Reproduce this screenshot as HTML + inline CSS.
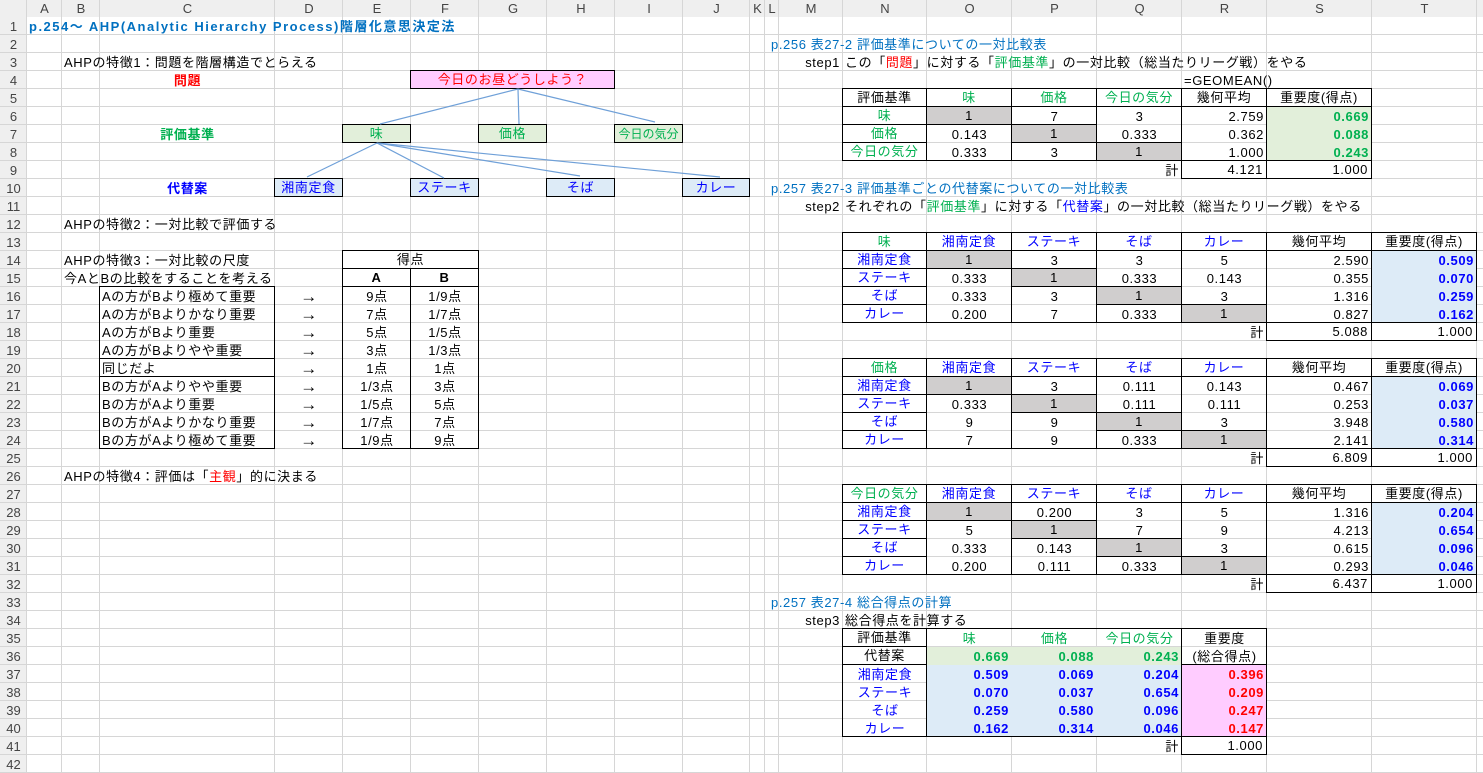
<!DOCTYPE html>
<html><head><meta charset="utf-8">
<style>
*{box-sizing:border-box;margin:0;padding:0}
body{width:1483px;height:763px;overflow:hidden;background:#fff;font-family:"Liberation Sans","Noto Sans CJK JP",sans-serif;font-size:13px;color:#000;position:relative}
#g{position:absolute;left:0;top:0;display:grid;width:1483px;
grid-template-columns:27px 35px 38px 175px 68px 68px 68px 68px 68px 68px 67px 15px 14px 64px 84px 85px 85px 85px 85px 105px 105px 6px;
grid-template-rows:17px repeat(42,18px);
background:
linear-gradient(#d6d6d6,#d6d6d6) 26px 0/1px 100% no-repeat,
linear-gradient(#d6d6d6,#d6d6d6) 61px 0/1px 100% no-repeat,
linear-gradient(#d6d6d6,#d6d6d6) 99px 0/1px 100% no-repeat,
linear-gradient(#d6d6d6,#d6d6d6) 274px 0/1px 100% no-repeat,
linear-gradient(#d6d6d6,#d6d6d6) 342px 0/1px 100% no-repeat,
linear-gradient(#d6d6d6,#d6d6d6) 410px 0/1px 100% no-repeat,
linear-gradient(#d6d6d6,#d6d6d6) 478px 0/1px 100% no-repeat,
linear-gradient(#d6d6d6,#d6d6d6) 546px 0/1px 100% no-repeat,
linear-gradient(#d6d6d6,#d6d6d6) 614px 0/1px 100% no-repeat,
linear-gradient(#d6d6d6,#d6d6d6) 682px 0/1px 100% no-repeat,
linear-gradient(#d6d6d6,#d6d6d6) 749px 0/1px 100% no-repeat,
linear-gradient(#d6d6d6,#d6d6d6) 764px 0/1px 100% no-repeat,
linear-gradient(#d6d6d6,#d6d6d6) 778px 0/1px 100% no-repeat,
linear-gradient(#d6d6d6,#d6d6d6) 842px 0/1px 100% no-repeat,
linear-gradient(#d6d6d6,#d6d6d6) 926px 0/1px 100% no-repeat,
linear-gradient(#d6d6d6,#d6d6d6) 1011px 0/1px 100% no-repeat,
linear-gradient(#d6d6d6,#d6d6d6) 1096px 0/1px 100% no-repeat,
linear-gradient(#d6d6d6,#d6d6d6) 1181px 0/1px 100% no-repeat,
linear-gradient(#d6d6d6,#d6d6d6) 1266px 0/1px 100% no-repeat,
linear-gradient(#d6d6d6,#d6d6d6) 1371px 0/1px 100% no-repeat,
linear-gradient(#d6d6d6,#d6d6d6) 1476px 0/1px 100% no-repeat,
repeating-linear-gradient(to bottom,transparent 0 17px,#d6d6d6 17px 18px) 0 17px/100% 100% no-repeat,
linear-gradient(#efefef,#efefef) 0 0/100% 17px no-repeat,
linear-gradient(#efefef,#efefef) 0 0/27px 100% no-repeat;
}
#g>i{font-style:normal;display:flex;align-items:center;justify-content:center;white-space:nowrap;line-height:1;letter-spacing:0.6px}
#g>i.l{justify-content:flex-start;padding-left:2px}
#g>i.r{justify-content:flex-end;padding-right:3px}
#g>i.h{color:#444;font-size:13px;letter-spacing:0}
#g>i.ar{font-size:17px}
.b{border:1px solid #000;margin:-1px 0 0 -1px}
.x{z-index:2}
.gy{background:#d0cece}
.gn{background:#e2efda}
.bb{background:#ddebf7}
.pk{background:#ffccff}
.G{color:#00b050}.B{color:#0000ff}.R{color:#ff0000}.T{color:#0070c0}
.w{font-weight:bold}
svg{position:absolute;left:0;top:0;z-index:5}
</style></head><body>
<div id="g">
<i class="h" style="grid-area:1/2">A</i><i class="h" style="grid-area:1/3">B</i><i class="h" style="grid-area:1/4">C</i><i class="h" style="grid-area:1/5">D</i><i class="h" style="grid-area:1/6">E</i><i class="h" style="grid-area:1/7">F</i><i class="h" style="grid-area:1/8">G</i><i class="h" style="grid-area:1/9">H</i><i class="h" style="grid-area:1/10">I</i><i class="h" style="grid-area:1/11">J</i><i class="h" style="grid-area:1/12">K</i><i class="h" style="grid-area:1/13">L</i><i class="h" style="grid-area:1/14">M</i><i class="h" style="grid-area:1/15">N</i><i class="h" style="grid-area:1/16">O</i><i class="h" style="grid-area:1/17">P</i><i class="h" style="grid-area:1/18">Q</i><i class="h" style="grid-area:1/19">R</i><i class="h" style="grid-area:1/20">S</i><i class="h" style="grid-area:1/21">T</i>
<i class="h" style="grid-area:2/1">1</i><i class="h" style="grid-area:3/1">2</i><i class="h" style="grid-area:4/1">3</i><i class="h" style="grid-area:5/1">4</i><i class="h" style="grid-area:6/1">5</i><i class="h" style="grid-area:7/1">6</i><i class="h" style="grid-area:8/1">7</i><i class="h" style="grid-area:9/1">8</i><i class="h" style="grid-area:10/1">9</i><i class="h" style="grid-area:11/1">10</i><i class="h" style="grid-area:12/1">11</i><i class="h" style="grid-area:13/1">12</i><i class="h" style="grid-area:14/1">13</i><i class="h" style="grid-area:15/1">14</i><i class="h" style="grid-area:16/1">15</i><i class="h" style="grid-area:17/1">16</i><i class="h" style="grid-area:18/1">17</i><i class="h" style="grid-area:19/1">18</i><i class="h" style="grid-area:20/1">19</i><i class="h" style="grid-area:21/1">20</i><i class="h" style="grid-area:22/1">21</i><i class="h" style="grid-area:23/1">22</i><i class="h" style="grid-area:24/1">23</i><i class="h" style="grid-area:25/1">24</i><i class="h" style="grid-area:26/1">25</i><i class="h" style="grid-area:27/1">26</i><i class="h" style="grid-area:28/1">27</i><i class="h" style="grid-area:29/1">28</i><i class="h" style="grid-area:30/1">29</i><i class="h" style="grid-area:31/1">30</i><i class="h" style="grid-area:32/1">31</i><i class="h" style="grid-area:33/1">32</i><i class="h" style="grid-area:34/1">33</i><i class="h" style="grid-area:35/1">34</i><i class="h" style="grid-area:36/1">35</i><i class="h" style="grid-area:37/1">36</i><i class="h" style="grid-area:38/1">37</i><i class="h" style="grid-area:39/1">38</i><i class="h" style="grid-area:40/1">39</i><i class="h" style="grid-area:41/1">40</i><i class="h" style="grid-area:42/1">41</i><i class="h" style="grid-area:43/1">42</i>

<i class="l T w" style="grid-area:2/2/3/12;letter-spacing:1.5px">p.254～ AHP(Analytic Hierarchy Process)階層化意思決定法</i>
<i class="l" style="grid-area:4/3/5/8">AHPの特徴1：問題を階層構造でとらえる</i>
<i class="R w" style="grid-area:5/4">問題</i>
<i class="b pk R" style="grid-area:5/7/6/10">今日のお昼どうしよう？</i>
<i class="G w" style="grid-area:8/4">評価基準</i>
<i class="b gn G" style="grid-area:8/6">味</i>
<i class="b gn G" style="grid-area:8/8">価格</i>
<i class="b gn G" style="grid-area:8/10;font-size:12px;letter-spacing:0">今日の気分</i>
<i class="B w" style="grid-area:11/4">代替案</i>
<i class="b bb B" style="grid-area:11/5">湘南定食</i>
<i class="b bb B" style="grid-area:11/7">ステーキ</i>
<i class="b bb B" style="grid-area:11/9">そば</i>
<i class="b bb B" style="grid-area:11/11">カレー</i>
<i class="l" style="grid-area:13/3/14/8">AHPの特徴2：一対比較で評価する</i>
<i class="l" style="grid-area:15/3/16/6">AHPの特徴3：一対比較の尺度</i>
<i class="l" style="grid-area:16/3/17/6">今AとBの比較をすることを考える</i>
<i class="b" style="grid-area:15/6/16/8">得点</i>
<i class="b w" style="grid-area:16/6">A</i>
<i class="b w" style="grid-area:16/7">B</i>
<i class="l" style="grid-area:17/4">Aの方がBより極めて重要</i><i class="ar" style="grid-area:17/5">→</i><i style="grid-area:17/6">9点</i><i style="grid-area:17/7">1/9点</i>
<i class="l" style="grid-area:18/4">Aの方がBよりかなり重要</i><i class="ar" style="grid-area:18/5">→</i><i style="grid-area:18/6">7点</i><i style="grid-area:18/7">1/7点</i>
<i class="l" style="grid-area:19/4">Aの方がBより重要</i><i class="ar" style="grid-area:19/5">→</i><i style="grid-area:19/6">5点</i><i style="grid-area:19/7">1/5点</i>
<i class="l" style="grid-area:20/4">Aの方がBよりやや重要</i><i class="ar" style="grid-area:20/5">→</i><i style="grid-area:20/6">3点</i><i style="grid-area:20/7">1/3点</i>
<i class="l" style="grid-area:21/4">同じだよ</i><i class="ar" style="grid-area:21/5">→</i><i style="grid-area:21/6">1点</i><i style="grid-area:21/7">1点</i>
<i class="l" style="grid-area:22/4">Bの方がAよりやや重要</i><i class="ar" style="grid-area:22/5">→</i><i style="grid-area:22/6">1/3点</i><i style="grid-area:22/7">3点</i>
<i class="l" style="grid-area:23/4">Bの方がAより重要</i><i class="ar" style="grid-area:23/5">→</i><i style="grid-area:23/6">1/5点</i><i style="grid-area:23/7">5点</i>
<i class="l" style="grid-area:24/4">Bの方がAよりかなり重要</i><i class="ar" style="grid-area:24/5">→</i><i style="grid-area:24/6">1/7点</i><i style="grid-area:24/7">7点</i>
<i class="l" style="grid-area:25/4">Bの方がAより極めて重要</i><i class="ar" style="grid-area:25/5">→</i><i style="grid-area:25/6">1/9点</i><i style="grid-area:25/7">9点</i>
<i class="b x" style="grid-area:17/4/21/5"></i><i class="b x" style="grid-area:21/4/22/5"></i><i class="b x" style="grid-area:22/4/26/5"></i>
<i class="b x" style="grid-area:17/6/26/7"></i><i class="b x" style="grid-area:17/7/26/8"></i>
<i class="l" style="grid-area:27/3/28/8">AHPの特徴4：評価は「<span class="R">主観</span>」的に決まる</i>

<i class="l T" style="grid-area:3/13/4/19;padding-left:6px">p.256 表27-2 評価基準についての一対比較表</i>
<i class="r" style="grid-area:4/14">step1</i>
<i class="l" style="grid-area:4/15/5/21">この「<span class="R">問題</span>」に対する「<span class="G">評価基準</span>」の一対比較（総当たりリーグ戦）をやる</i>
<i class="l" style="grid-area:5/19/6/21">=GEOMEAN()</i>
<i class="b" style="grid-area:6/15">評価基準</i><i class="b G" style="grid-area:6/16">味</i><i class="b G" style="grid-area:6/17">価格</i><i class="b G" style="grid-area:6/18">今日の気分</i><i class="b" style="grid-area:6/19">幾何平均</i><i class="b" style="grid-area:6/20">重要度(得点)</i>
<i class="b G" style="grid-area:7/15">味</i><i class="b G" style="grid-area:8/15">価格</i><i class="b G" style="grid-area:9/15">今日の気分</i>
<i class="b gy" style="grid-area:7/16">1</i><i style="grid-area:7/17">7</i><i style="grid-area:7/18">3</i><i class="r" style="grid-area:7/19">2.759</i><i class="r gn G w" style="grid-area:7/20">0.669</i>
<i style="grid-area:8/16">0.143</i><i class="b gy" style="grid-area:8/17">1</i><i style="grid-area:8/18">0.333</i><i class="r" style="grid-area:8/19">0.362</i><i class="r gn G w" style="grid-area:8/20">0.088</i>
<i style="grid-area:9/16">0.333</i><i style="grid-area:9/17">3</i><i class="b gy" style="grid-area:9/18">1</i><i class="r" style="grid-area:9/19">1.000</i><i class="r gn G w" style="grid-area:9/20">0.243</i>
<i class="b x" style="grid-area:7/16/10/17"></i><i class="b x" style="grid-area:7/17/10/18"></i><i class="b x" style="grid-area:7/18/10/19"></i><i class="b x" style="grid-area:7/19/10/20"></i><i class="b x" style="grid-area:7/20/10/21"></i>
<i class="r" style="grid-area:10/18">計</i><i class="b r" style="grid-area:10/19">4.121</i><i class="b r" style="grid-area:10/20">1.000</i>

<i class="l T" style="grid-area:11/13/12/19;padding-left:6px">p.257 表27-3 評価基準ごとの代替案についての一対比較表</i>
<i class="r" style="grid-area:12/14">step2</i>
<i class="l" style="grid-area:12/15/13/21">それぞれの「<span class="G">評価基準</span>」に対する「<span class="B">代替案</span>」の一対比較（総当たりリーグ戦）をやる</i>

<i class="b G" style="grid-area:14/15">味</i><i class="b B" style="grid-area:14/16">湘南定食</i><i class="b B" style="grid-area:14/17">ステーキ</i><i class="b B" style="grid-area:14/18">そば</i><i class="b B" style="grid-area:14/19">カレー</i><i class="b" style="grid-area:14/20">幾何平均</i><i class="b" style="grid-area:14/21">重要度(得点)</i>
<i class="b B" style="grid-area:15/15">湘南定食</i><i class="b B" style="grid-area:16/15">ステーキ</i><i class="b B" style="grid-area:17/15">そば</i><i class="b B" style="grid-area:18/15">カレー</i>
<i class="b gy" style="grid-area:15/16">1</i><i style="grid-area:15/17">3</i><i style="grid-area:15/18">3</i><i style="grid-area:15/19">5</i><i class="r" style="grid-area:15/20">2.590</i><i class="r bb B w" style="grid-area:15/21">0.509</i>
<i style="grid-area:16/16">0.333</i><i class="b gy" style="grid-area:16/17">1</i><i style="grid-area:16/18">0.333</i><i style="grid-area:16/19">0.143</i><i class="r" style="grid-area:16/20">0.355</i><i class="r bb B w" style="grid-area:16/21">0.070</i>
<i style="grid-area:17/16">0.333</i><i style="grid-area:17/17">3</i><i class="b gy" style="grid-area:17/18">1</i><i style="grid-area:17/19">3</i><i class="r" style="grid-area:17/20">1.316</i><i class="r bb B w" style="grid-area:17/21">0.259</i>
<i style="grid-area:18/16">0.200</i><i style="grid-area:18/17">7</i><i style="grid-area:18/18">0.333</i><i class="b gy" style="grid-area:18/19">1</i><i class="r" style="grid-area:18/20">0.827</i><i class="r bb B w" style="grid-area:18/21">0.162</i>
<i class="b x" style="grid-area:15/16/19/17"></i><i class="b x" style="grid-area:15/17/19/18"></i><i class="b x" style="grid-area:15/18/19/19"></i><i class="b x" style="grid-area:15/19/19/20"></i><i class="b x" style="grid-area:15/20/19/21"></i><i class="b x" style="grid-area:15/21/19/22"></i>
<i class="r" style="grid-area:19/19">計</i><i class="b r" style="grid-area:19/20">5.088</i><i class="b r" style="grid-area:19/21">1.000</i>

<i class="b G" style="grid-area:21/15">価格</i><i class="b B" style="grid-area:21/16">湘南定食</i><i class="b B" style="grid-area:21/17">ステーキ</i><i class="b B" style="grid-area:21/18">そば</i><i class="b B" style="grid-area:21/19">カレー</i><i class="b" style="grid-area:21/20">幾何平均</i><i class="b" style="grid-area:21/21">重要度(得点)</i>
<i class="b B" style="grid-area:22/15">湘南定食</i><i class="b B" style="grid-area:23/15">ステーキ</i><i class="b B" style="grid-area:24/15">そば</i><i class="b B" style="grid-area:25/15">カレー</i>
<i class="b gy" style="grid-area:22/16">1</i><i style="grid-area:22/17">3</i><i style="grid-area:22/18">0.111</i><i style="grid-area:22/19">0.143</i><i class="r" style="grid-area:22/20">0.467</i><i class="r bb B w" style="grid-area:22/21">0.069</i>
<i style="grid-area:23/16">0.333</i><i class="b gy" style="grid-area:23/17">1</i><i style="grid-area:23/18">0.111</i><i style="grid-area:23/19">0.111</i><i class="r" style="grid-area:23/20">0.253</i><i class="r bb B w" style="grid-area:23/21">0.037</i>
<i style="grid-area:24/16">9</i><i style="grid-area:24/17">9</i><i class="b gy" style="grid-area:24/18">1</i><i style="grid-area:24/19">3</i><i class="r" style="grid-area:24/20">3.948</i><i class="r bb B w" style="grid-area:24/21">0.580</i>
<i style="grid-area:25/16">7</i><i style="grid-area:25/17">9</i><i style="grid-area:25/18">0.333</i><i class="b gy" style="grid-area:25/19">1</i><i class="r" style="grid-area:25/20">2.141</i><i class="r bb B w" style="grid-area:25/21">0.314</i>
<i class="b x" style="grid-area:22/16/26/17"></i><i class="b x" style="grid-area:22/17/26/18"></i><i class="b x" style="grid-area:22/18/26/19"></i><i class="b x" style="grid-area:22/19/26/20"></i><i class="b x" style="grid-area:22/20/26/21"></i><i class="b x" style="grid-area:22/21/26/22"></i>
<i class="r" style="grid-area:26/19">計</i><i class="b r" style="grid-area:26/20">6.809</i><i class="b r" style="grid-area:26/21">1.000</i>

<i class="b G" style="grid-area:28/15">今日の気分</i><i class="b B" style="grid-area:28/16">湘南定食</i><i class="b B" style="grid-area:28/17">ステーキ</i><i class="b B" style="grid-area:28/18">そば</i><i class="b B" style="grid-area:28/19">カレー</i><i class="b" style="grid-area:28/20">幾何平均</i><i class="b" style="grid-area:28/21">重要度(得点)</i>
<i class="b B" style="grid-area:29/15">湘南定食</i><i class="b B" style="grid-area:30/15">ステーキ</i><i class="b B" style="grid-area:31/15">そば</i><i class="b B" style="grid-area:32/15">カレー</i>
<i class="b gy" style="grid-area:29/16">1</i><i style="grid-area:29/17">0.200</i><i style="grid-area:29/18">3</i><i style="grid-area:29/19">5</i><i class="r" style="grid-area:29/20">1.316</i><i class="r bb B w" style="grid-area:29/21">0.204</i>
<i style="grid-area:30/16">5</i><i class="b gy" style="grid-area:30/17">1</i><i style="grid-area:30/18">7</i><i style="grid-area:30/19">9</i><i class="r" style="grid-area:30/20">4.213</i><i class="r bb B w" style="grid-area:30/21">0.654</i>
<i style="grid-area:31/16">0.333</i><i style="grid-area:31/17">0.143</i><i class="b gy" style="grid-area:31/18">1</i><i style="grid-area:31/19">3</i><i class="r" style="grid-area:31/20">0.615</i><i class="r bb B w" style="grid-area:31/21">0.096</i>
<i style="grid-area:32/16">0.200</i><i style="grid-area:32/17">0.111</i><i style="grid-area:32/18">0.333</i><i class="b gy" style="grid-area:32/19">1</i><i class="r" style="grid-area:32/20">0.293</i><i class="r bb B w" style="grid-area:32/21">0.046</i>
<i class="b x" style="grid-area:29/16/33/17"></i><i class="b x" style="grid-area:29/17/33/18"></i><i class="b x" style="grid-area:29/18/33/19"></i><i class="b x" style="grid-area:29/19/33/20"></i><i class="b x" style="grid-area:29/20/33/21"></i><i class="b x" style="grid-area:29/21/33/22"></i>
<i class="r" style="grid-area:33/19">計</i><i class="b r" style="grid-area:33/20">6.437</i><i class="b r" style="grid-area:33/21">1.000</i>

<i class="l T" style="grid-area:34/13/35/19;padding-left:6px">p.257 表27-4 総合得点の計算</i>
<i class="r" style="grid-area:35/14">step3</i>
<i class="l" style="grid-area:35/15/36/19">総合得点を計算する</i>
<i class="b" style="grid-area:36/15">評価基準</i><i class="G" style="grid-area:36/16">味</i><i class="G" style="grid-area:36/17">価格</i><i class="G" style="grid-area:36/18">今日の気分</i><i style="grid-area:36/19">重要度</i>
<i class="b" style="grid-area:37/15">代替案</i>
<i class="r gn G w" style="grid-area:37/16">0.669</i><i class="r gn G w" style="grid-area:37/17">0.088</i><i class="r gn G w" style="grid-area:37/18">0.243</i><i style="grid-area:37/19">(総合得点)</i>
<i class="B" style="grid-area:38/15">湘南定食</i><i class="B" style="grid-area:39/15">ステーキ</i><i class="B" style="grid-area:40/15">そば</i><i class="B" style="grid-area:41/15">カレー</i>
<i class="r bb B w" style="grid-area:38/16">0.509</i><i class="r bb B w" style="grid-area:38/17">0.069</i><i class="r bb B w" style="grid-area:38/18">0.204</i><i class="r pk R w" style="grid-area:38/19">0.396</i>
<i class="r bb B w" style="grid-area:39/16">0.070</i><i class="r bb B w" style="grid-area:39/17">0.037</i><i class="r bb B w" style="grid-area:39/18">0.654</i><i class="r pk R w" style="grid-area:39/19">0.209</i>
<i class="r bb B w" style="grid-area:40/16">0.259</i><i class="r bb B w" style="grid-area:40/17">0.580</i><i class="r bb B w" style="grid-area:40/18">0.096</i><i class="r pk R w" style="grid-area:40/19">0.247</i>
<i class="r bb B w" style="grid-area:41/16">0.162</i><i class="r bb B w" style="grid-area:41/17">0.314</i><i class="r bb B w" style="grid-area:41/18">0.046</i><i class="r pk R w" style="grid-area:41/19">0.147</i>
<i class="b x" style="grid-area:36/15/42/20"></i><i class="b x" style="grid-area:38/15/42/16"></i><i class="b x" style="grid-area:36/19/38/20"></i><i class="b x" style="grid-area:38/19/42/20"></i>
<i class="r" style="grid-area:42/18">計</i><i class="b r" style="grid-area:42/19">1.000</i>
</div>
<svg width="1483" height="763" viewBox="0 0 1483 763">
<g stroke="#6fa0d8" stroke-width="1.2" fill="none">
<line x1="518" y1="89" x2="380" y2="124"/>
<line x1="518" y1="89" x2="519" y2="124"/>
<line x1="518" y1="89" x2="655" y2="122"/>
<line x1="377" y1="143" x2="307" y2="177"/>
<line x1="377" y1="143" x2="444" y2="178"/>
<line x1="377" y1="143" x2="580" y2="176"/>
<line x1="377" y1="143" x2="720" y2="177"/>
</g>
</svg>
</body></html>
